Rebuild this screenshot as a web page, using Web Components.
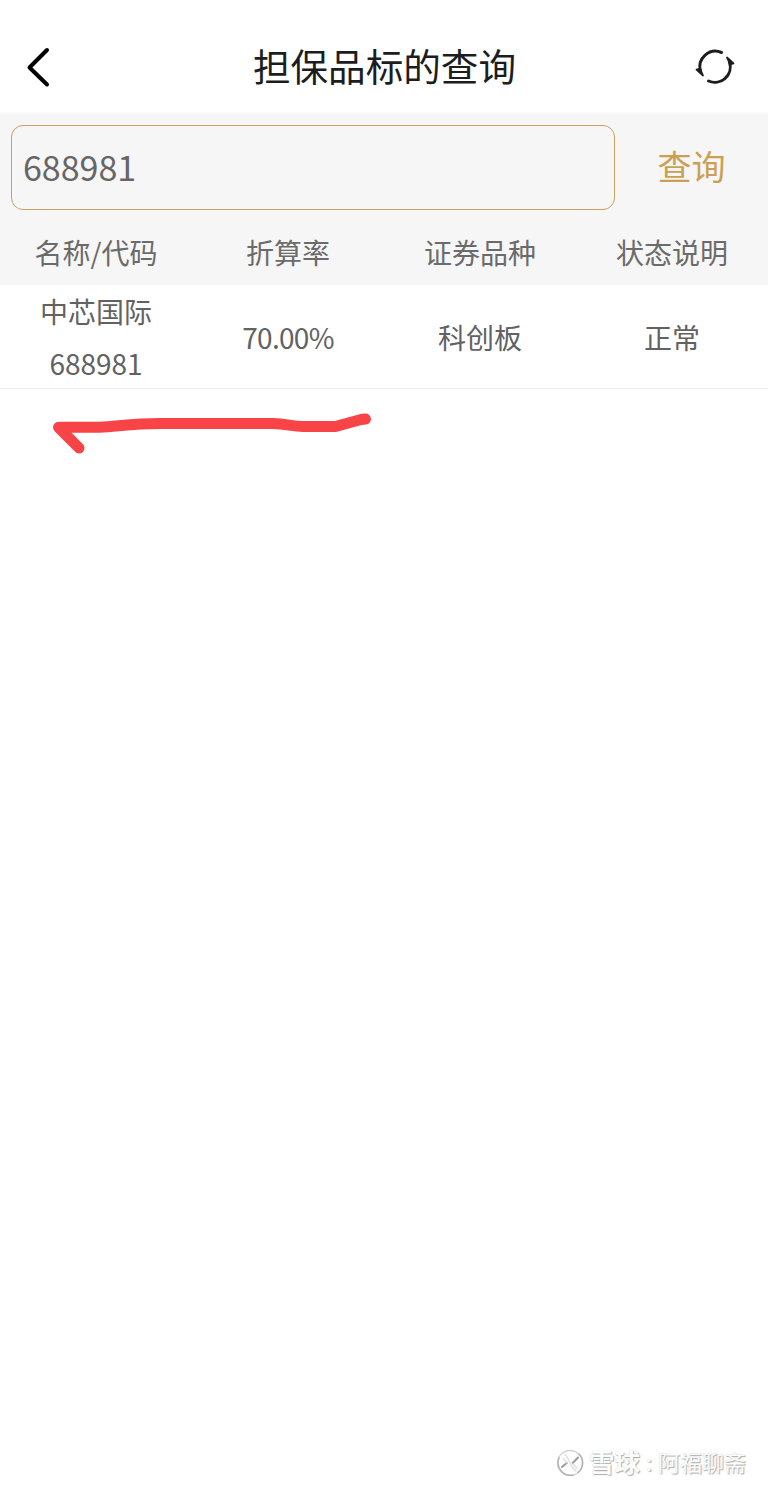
<!DOCTYPE html>
<html lang="zh-CN">
<head>
<meta charset="utf-8">
<title>担保品标的查询</title>
<style>
body {
    margin: 0;
    background: #fff;
    font-family: "Noto Sans CJK SC", sans-serif;
}
</style>
</head>
<body>
<query-page>
    <nav-bar slot="top">担保品标的查询</nav-bar>
    <search-bar slot="top" value="688981">查询</search-bar>
    <stock-table></stock-table>
    <hand-mark></hand-mark>
    <water-mark slot="bottom" brand="雪球">阿福聊斋</water-mark>
</query-page>

<script>
class QueryPage extends HTMLElement {

    constructor() {
        super();
        this.attachShadow({mode: "open"}).innerHTML = `
        <style>
        :host {
            display: flex;
            flex-direction: column;
            height: 1489px;
            overflow: hidden;
        }
        main {
            flex: 1;
        }
        </style>
        <slot name="top"></slot>
        <main><slot></slot></main>
        <slot name="bottom"></slot>`;
    }
}

class NavBar extends HTMLElement {

    constructor() {
        super();
        this.attachShadow({mode: "open"}).innerHTML = `
        <style>
        :host {
            display: grid;
            grid-template-columns: 80px 1fr 80px;
            align-items: start;
            box-sizing: border-box;
            height: 112px;
            padding-top: 24px;
            color: #1c1d20;
        }
        h1 {
            margin: 0;
            font-size: 37.6px;
            font-weight: 400;
            line-height: 82px;
            text-align: center;
            padding-left: 1px;
        }
        svg {
            display: block;
        }
        </style>
        <svg width="80" height="88" viewBox="0 24 80 88" fill="none" stroke="#000" stroke-width="4" stroke-linecap="round" stroke-linejoin="round">
            <path d="M47 50 L29.500 67.500 L47 84.500"/>
        </svg>
        <h1><slot></slot></h1>
        <svg width="80" height="88" viewBox="688 24 80 88" fill="none" stroke="#1c1d20" stroke-width="3" stroke-linecap="round">
            <path d="M721.500 52.500 A15.500 15.500 0 0 0 700.500 71"/>
            <path d="M708.500 81 A15.500 15.500 0 0 0 729.500 62"/>
            <path d="M696.500 69.500 L700 68.500 L703 75.500 Z M733.500 63.500 L730 64.500 L727 57.500 Z" stroke-width="1.800" stroke-linejoin="round" fill="#1c1d20"/>
        </svg>`;
    }
}

class SearchBar extends HTMLElement {

    constructor() {
        super();
        this.attachShadow({mode: "open"}).innerHTML = `
        <style>
        :host {
            display: grid;
            grid-template-columns: 604px 1fr;
            box-sizing: border-box;
            height: 110px;
            padding: 11px 0 12px 11px;
            background: #f6f6f6;
            border-top: 2px solid #fafafa;
            font-size: 34px;
        }
        .field {
            box-sizing: border-box;
            height: 85px;
            padding-left: 11px;
            border: 1px solid #c5a35f;
            border-radius: 12px;
            color: #666;
            line-height: 82px;
        }
        .action {
            color: #cba052;
            line-height: 82px;
            text-align: center;
        }
        </style>
        <div class="field">${this.getAttribute("value")}</div>
        <div class="action"><slot></slot></div>`;
    }
}

class StockTable extends HTMLElement {

    constructor() {
        super();
        this.attachShadow({mode: "open"}).innerHTML = `
        <style>
        :host {
            display: block;
            color: #626262;
            font-size: 28px;
        }
        .row {
            display: grid;
            grid-template-columns: repeat(4, 1fr);
            align-items: center;
            text-align: center;
        }
        .head {
            height: 63px;
            background: #f6f6f6;
            color: #6b6b6b;
            line-height: 61px;
            align-items: start;
        }
        .item {
            box-sizing: border-box;
            height: 104px;
            border-bottom: 1px solid #eaeaea;
            line-height: 52px;
        }
        .rate {
            letter-spacing: -.7px;
        }
        </style>
        <div class="row head">
            <span>名称/代码</span><span>折算率</span><span>证券品种</span><span>状态说明</span>
        </div>
        <div class="row item">
            <span>中芯国际<br>688981</span><span class="rate">70.00%</span><span>科创板</span><span>正常</span>
        </div>`;
    }
}

// hand-drawn red arrow under the first row
class HandMark extends HTMLElement {

    constructor() {
        super();
        this.attachShadow({mode: "open"}).innerHTML = `
        <style>
        :host {
            display: block;
        }
        svg {
            display: block;
        }
        </style>
        <svg width="400" height="80" viewBox="0 389 400 80" fill="none" stroke="#f84446" stroke-width="11" stroke-linecap="round" stroke-linejoin="round">
            <path d="M79 448 L58.500 427.300 H100 C120 426 135 423.500 160 423.500 H273 C287 424 292 426.500 303 426.500 H335.500 L361 419.500 L365.500 419"/>
        </svg>`;
    }
}

class WaterMark extends HTMLElement {

    constructor() {
        super();
        this.attachShadow({mode: "open"}).innerHTML = `
        <style>
        :host {
            display: flex;
            align-items: center;
            justify-content: flex-end;
            height: 52px;
            padding-right: 22px;
            color: #fcfcfc;
            font-size: 22px;
            line-height: 48px;
            text-shadow: 1px 1px 1px #aaa, 0 0 1px #ccc;
        }
        b, i, span {
            height: 52px;
        }
        b {
            margin-left: 5px;
            font-size: 25.500px;
        }
        i {
            width: 18px;
            font-style: normal;
            text-align: center;
        }
        </style>
        <svg width="28" height="28" viewBox="0 0 28 28" fill="none" stroke="#b4b4b4" stroke-width="1.600" stroke-linecap="round">
            <circle cx="14" cy="14" r="12.500" stroke="#d2d2d2" stroke-width="1.300"/>
            <path d="M23 5 A12.500 12.500 0 0 1 22 23.500 M3 9 A12.500 12.500 0 0 0 17 26"/>
            <path d="M6 18 L11 13.700 M16.700 14 L22 8.500" stroke="#9c9c9c" stroke-width="2"/>
            <path d="M7 9.500 L11 13.700 M17 15 L21 19.500 M9 6 C14 9 13 17 20 22" stroke="#e2e2e2"/>
        </svg>
        <b>${this.getAttribute("brand")}</b><i>:</i><span><slot></slot></span>`;
    }
}

customElements.define("query-page", QueryPage);
customElements.define("nav-bar", NavBar);
customElements.define("search-bar", SearchBar);
customElements.define("stock-table", StockTable);
customElements.define("hand-mark", HandMark);
customElements.define("water-mark", WaterMark);
</script>
</body>
</html>
